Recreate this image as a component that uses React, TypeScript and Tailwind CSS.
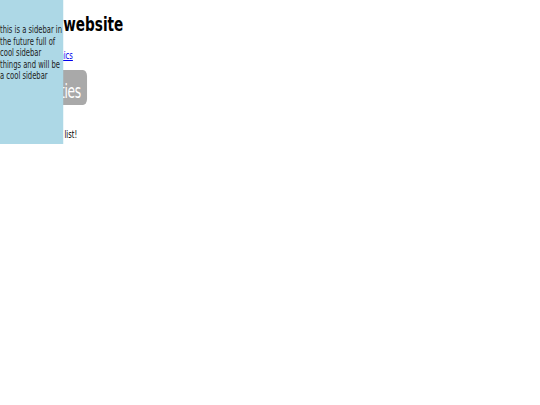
import React from 'react';

// The page is drawn at its natural width and narrowed as a whole,
// the way the captured page appears.
const App: React.FC = () => {
  return (
    <div className="h-[405px] w-[540px] overflow-hidden bg-white">
      <div className="relative h-[405px] w-[794px] origin-top-left scale-x-[0.68] text-black font-['DejaVu_Sans',sans-serif]">
        {/* Sidebar floats over the page content */}
        <aside className="absolute left-0 top-0 z-10 h-[144px] w-[93px] bg-[#add8e6] pt-[24px] text-[10px] leading-[11.6px] text-[#1c1c1c]">
          this is a sidebar in the future full of cool sidebar things and will be a cool sidebar
        </aside>

        <main className="flex flex-col items-start">
          <h1 className="mt-[13px] whitespace-nowrap text-[20px] font-bold leading-[23px]">My cool website</h1>
          <a href="#" className="mt-[14px] whitespace-nowrap text-[10px] leading-[11.6px] text-[#0000ee] underline">
            Check out my comics
          </a>
          <div className="mt-[8px] flex h-[35px] items-center rounded-[6px] bg-[#a9a9a9] pl-[6px] pr-[9px] pt-[8px]">
            <span className="whitespace-nowrap text-[20px] leading-[22px] tracking-[-0.5px] text-white font-['DejaVu_Sans_Condensed','DejaVu_Sans',sans-serif]">
              Fun Activities
            </span>
          </div>
          <p className="mt-[24px] whitespace-nowrap text-[10px] leading-[11.6px]">This is my reading list!</p>
        </main>
      </div>
    </div>
  );
};

export default App;
